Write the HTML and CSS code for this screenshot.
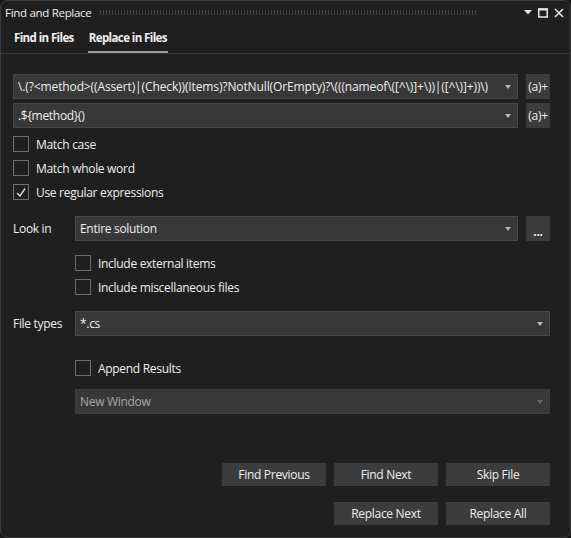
FILE: index.html
```html
<!DOCTYPE html>
<html lang="en">
<head>
    <meta charset="UTF-8">
    <title>Find and Replace</title>
    <link rel="stylesheet" href="styles.css">
</head>
<body>
    <div class="window">
        <div class="titlebar">
            <span class="title">Find and Replace</span>
            <span class="grip"></span>
            <span class="win-icons">
                <svg width="8" height="5" viewBox="0 0 8 5"><path d="M0 0h8L4 4.5z" fill="#e8e8e8"/></svg>
                <svg width="10" height="10" viewBox="0 0 10 10"><rect x="0.75" y="1" width="8.5" height="8" fill="none" stroke="#e8e8e8" stroke-width="1.5"/><rect x="0" y="0.5" width="10" height="2" fill="#e8e8e8"/></svg>
                <svg width="10" height="10" viewBox="0 0 10 10"><path d="M1 1l8 8M9 1l-8 8" stroke="#e8e8e8" stroke-width="1.6"/></svg>
            </span>
        </div>

        <div class="tabs">
            <span class="tab">Find in Files</span>
            <span class="tab active">Replace in Files</span>
        </div>

        <div class="content">
            <div class="field-row">
                <div class="combo"><span class="combo-text regex">\.(?&lt;method&gt;((Assert)|(Check))(Items)?NotNull(OrEmpty)?\(((nameof\([^\)]+\))|([^\)]+))\)</span><span class="arrow"></span></div>
                <div class="side-btn">(a)+</div>
            </div>
            <div class="field-row">
                <div class="combo"><span class="combo-text">.${method}()</span><span class="arrow"></span></div>
                <div class="side-btn">(a)+</div>
            </div>

            <div class="checks">
                <label class="check"><span class="box"></span>Match case</label>
                <label class="check"><span class="box"></span>Match whole word</label>
                <label class="check"><span class="box checked"><svg width="10" height="9" viewBox="0 0 10 9"><path d="M1 5l3 3l5-7.5" fill="none" stroke="#dcdcdc" stroke-width="1.4"/></svg></span>Use regular expressions</label>
            </div>

            <div class="label-row look-in">
                <span class="label">Look in</span>
                <div class="combo"><span class="combo-text">Entire solution</span><span class="arrow"></span></div>
                <div class="side-btn dots">...</div>
            </div>
            <div class="indent checks sub-checks">
                <label class="check"><span class="box"></span>Include external items</label>
                <label class="check"><span class="box"></span>Include miscellaneous files</label>
            </div>

            <div class="label-row file-types">
                <span class="label">File types</span>
                <div class="combo"><span class="combo-text">*.cs</span><span class="arrow"></span></div>
            </div>

            <div class="indent append">
                <label class="check"><span class="box"></span>Append Results</label>
                <div class="combo disabled"><span class="combo-text">New Window</span><span class="arrow"></span></div>
            </div>

            <div class="buttons">
                <div class="btn-row">
                    <button>Find Previous</button>
                    <button>Find Next</button>
                    <button>Skip File</button>
                </div>
                <div class="btn-row">
                    <button>Replace Next</button>
                    <button>Replace All</button>
                </div>
            </div>
        </div>
    </div>
</body>
</html>
```

FILE: styles.css
```css
html, body {
    margin: 0;
    padding: 0;
    background: #161616;
}
body {
    font-family: "Open Sans", "Noto Sans", sans-serif;
    font-size: 12px;
    letter-spacing: -0.3px;
    color: #f0f0f0;
}
.window {
    width: 571px;
    height: 538px;
    box-sizing: border-box;
    border: 1px solid #3c3c3c;
    border-radius: 7px;
    background: #1f1f1f;
    display: flex;
    flex-direction: column;
    overflow: hidden;
}
.titlebar {
    height: 23px;
    display: flex;
    align-items: center;
    padding: 0 6px 0 4px;
}
.title {
    font-size: 11.5px;
}
.grip {
    flex: 1;
    height: 5px;
    margin: 0 46px 0 8px;
    background: radial-gradient(circle, #5c5c5c 0.7px, transparent 0.9px) 0 0 / 3px 2.5px;
}
.win-icons {
    display: flex;
    align-items: center;
    gap: 6px;
}
.tabs {
    height: 29px;
    display: flex;
    align-items: stretch;
    gap: 13px;
    padding-left: 12px;
    border-bottom: 1px solid #3a3a3a;
}
.tab {
    font-weight: 700;
    font-size: 11.5px;
    letter-spacing: -0.6px;
    display: flex;
    align-items: center;
    padding: 0 1px;
    border-bottom: 2px solid transparent;
}
.tab.active {
    border-bottom-color: #9a9a9a;
}
.content {
    padding: 20px 20px 0 12px;
    display: flex;
    flex-direction: column;
}
.field-row {
    display: flex;
    gap: 8px;
    margin-bottom: 4px;
}
.combo {
    flex: 1;
    height: 25px;
    box-sizing: border-box;
    background: #383838;
    border: 1px solid #464646;
    display: flex;
    align-items: center;
    padding: 0 6px 0 4px;
    min-width: 0;
}
.combo-text {
    flex: 1;
    white-space: nowrap;
    overflow: hidden;
}
.combo-text.regex {
    letter-spacing: -0.12px;
}
.arrow {
    width: 0;
    height: 0;
    border-left: 3.5px solid transparent;
    border-right: 3.5px solid transparent;
    border-top: 4px solid #b8b8b8;
    margin-left: 8px;
}
.combo.disabled {
    border-color: #3e3e3e;
    color: #a8a8a8;
}
.combo.disabled .arrow {
    border-top-color: #6a6a6a;
}
.side-btn {
    width: 24px;
    height: 25px;
    background: #3c3c3c;
    display: flex;
    align-items: center;
    justify-content: center;
}
.side-btn.dots {
    font-weight: 700;
    align-items: flex-end;
    line-height: 18px;
}
.checks {
    display: flex;
    flex-direction: column;
    gap: 8px;
    margin-top: 4px;
}
.check {
    display: flex;
    align-items: center;
    gap: 7px;
    height: 16px;
}
.box {
    width: 16px;
    height: 16px;
    box-sizing: border-box;
    border: 1px solid #6e6e6e;
    display: flex;
    align-items: center;
    justify-content: center;
}
.label-row {
    display: flex;
    align-items: center;
}
.label {
    width: 62px;
}
.look-in {
    gap: 8px;
    margin-top: 16px;
}
.look-in .label {
    width: 54px;
}
.indent {
    margin-left: 62px;
}
.sub-checks {
    margin-top: 14px;
}
.file-types {
    margin-top: 16px;
}
.append {
    margin-top: 24px;
    display: flex;
    flex-direction: column;
    gap: 13px;
}
.append .combo {
    flex: none;
    height: 25px;
}
.buttons {
    margin-top: 49px;
    display: flex;
    flex-direction: column;
    align-items: flex-end;
    gap: 16px;
}
.btn-row {
    display: flex;
    gap: 8px;
}
button {
    width: 104px;
    height: 23px;
    border: none;
    background: #3c3c3c;
    color: #f0f0f0;
    font-family: inherit;
    font-size: 12px;
    letter-spacing: -0.3px;
    padding: 0;
}
```
